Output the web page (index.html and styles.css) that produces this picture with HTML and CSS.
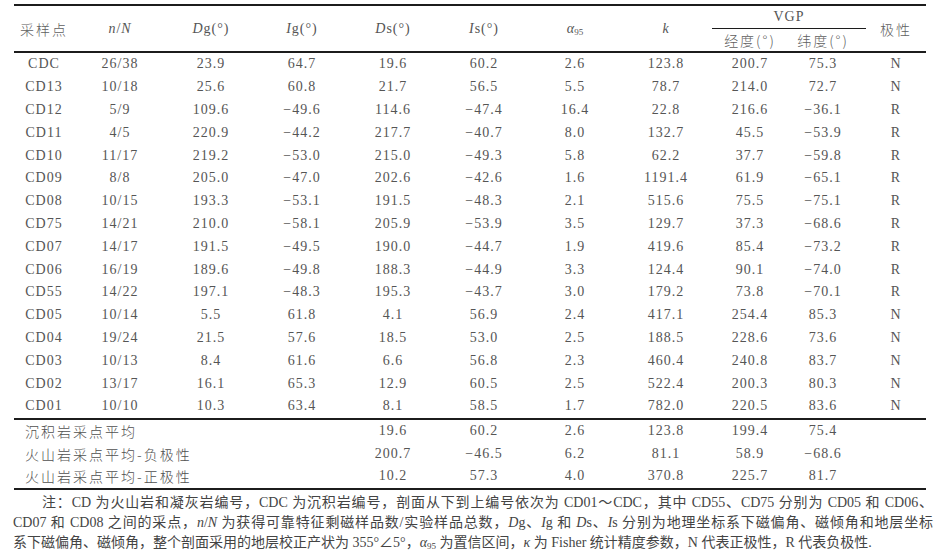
FILE: index.html
```html
<!DOCTYPE html>
<html lang="zh-CN">
<head>
<meta charset="utf-8">
<title>古地磁数据表</title>
<link rel="stylesheet" href="styles.css">
</head>
<body>
<table class="data">
  <colgroup>
    <col class="c-site"><col class="c-n"><col class="c-dg"><col class="c-ig"><col class="c-ds"><col class="c-is"><col class="c-a95"><col class="c-k"><col class="c-lon"><col class="c-lat"><col class="c-pol">
  </colgroup>
  <thead>
    <tr class="h1">
      <th rowspan="2" class="cjk">采样点</th>
      <th rowspan="2"><i>n</i>/<i>N</i></th>
      <th rowspan="2"><i>D</i>g(°)</th>
      <th rowspan="2"><i>I</i>g(°)</th>
      <th rowspan="2"><i>D</i>s(°)</th>
      <th rowspan="2"><i>I</i>s(°)</th>
      <th rowspan="2"><i class="alpha">α</i><sub>95</sub></th>
      <th rowspan="2"><i>k</i></th>
      <th colspan="2" class="vgp">VGP</th>
      <th rowspan="2" class="cjk">极性</th>
    </tr>
    <tr class="h2">
      <th class="cjk">经度(°)</th>
      <th class="cjk lat">纬度(°)</th>
    </tr>
  </thead>
  <tbody class="sites">
    <tr><td>CDC</td><td>26/38</td><td>23.9</td><td>64.7</td><td>19.6</td><td>60.2</td><td>2.6</td><td>123.8</td><td>200.7</td><td class="lat">75.3</td><td>N</td></tr>
    <tr><td>CD13</td><td>10/18</td><td>25.6</td><td>60.8</td><td>21.7</td><td>56.5</td><td>5.5</td><td>78.7</td><td>214.0</td><td class="lat">72.7</td><td>N</td></tr>
    <tr><td>CD12</td><td>5/9</td><td>109.6</td><td>−49.6</td><td>114.6</td><td>−47.4</td><td>16.4</td><td>22.8</td><td>216.6</td><td class="lat">−36.1</td><td>R</td></tr>
    <tr><td>CD11</td><td>4/5</td><td>220.9</td><td>−44.2</td><td>217.7</td><td>−40.7</td><td>8.0</td><td>132.7</td><td>45.5</td><td class="lat">−53.9</td><td>R</td></tr>
    <tr><td>CD10</td><td>11/17</td><td>219.2</td><td>−53.0</td><td>215.0</td><td>−49.3</td><td>5.8</td><td>62.2</td><td>37.7</td><td class="lat">−59.8</td><td>R</td></tr>
    <tr><td>CD09</td><td>8/8</td><td>205.0</td><td>−47.0</td><td>202.6</td><td>−42.6</td><td>1.6</td><td>1191.4</td><td>61.9</td><td class="lat">−65.1</td><td>R</td></tr>
    <tr><td>CD08</td><td>10/15</td><td>193.3</td><td>−53.1</td><td>191.5</td><td>−48.3</td><td>2.1</td><td>515.6</td><td>75.5</td><td class="lat">−75.1</td><td>R</td></tr>
    <tr><td>CD75</td><td>14/21</td><td>210.0</td><td>−58.1</td><td>205.9</td><td>−53.9</td><td>3.5</td><td>129.7</td><td>37.3</td><td class="lat">−68.6</td><td>R</td></tr>
    <tr><td>CD07</td><td>14/17</td><td>191.5</td><td>−49.5</td><td>190.0</td><td>−44.7</td><td>1.9</td><td>419.6</td><td>85.4</td><td class="lat">−73.2</td><td>R</td></tr>
    <tr><td>CD06</td><td>16/19</td><td>189.6</td><td>−49.8</td><td>188.3</td><td>−44.9</td><td>3.3</td><td>124.4</td><td>90.1</td><td class="lat">−74.0</td><td>R</td></tr>
    <tr><td>CD55</td><td>14/22</td><td>197.1</td><td>−48.3</td><td>195.3</td><td>−43.7</td><td>3.0</td><td>179.2</td><td>73.8</td><td class="lat">−70.1</td><td>R</td></tr>
    <tr><td>CD05</td><td>10/14</td><td>5.5</td><td>61.8</td><td>4.1</td><td>56.9</td><td>2.4</td><td>417.1</td><td>254.4</td><td class="lat">85.3</td><td>N</td></tr>
    <tr><td>CD04</td><td>19/24</td><td>21.5</td><td>57.6</td><td>18.5</td><td>53.0</td><td>2.5</td><td>188.5</td><td>228.6</td><td class="lat">73.6</td><td>N</td></tr>
    <tr><td>CD03</td><td>10/13</td><td>8.4</td><td>61.6</td><td>6.6</td><td>56.8</td><td>2.3</td><td>460.4</td><td>240.8</td><td class="lat">83.7</td><td>N</td></tr>
    <tr><td>CD02</td><td>13/17</td><td>16.1</td><td>65.3</td><td>12.9</td><td>60.5</td><td>2.5</td><td>522.4</td><td>200.3</td><td class="lat">80.3</td><td>N</td></tr>
    <tr><td>CD01</td><td>10/10</td><td>10.3</td><td>63.4</td><td>8.1</td><td>58.5</td><td>1.7</td><td>782.0</td><td>220.5</td><td class="lat">83.6</td><td>N</td></tr>
  </tbody>
  <tbody class="means">
    <tr><td colspan="4" class="label">沉积岩采点平均</td><td>19.6</td><td>60.2</td><td>2.6</td><td>123.8</td><td>199.4</td><td class="lat">75.4</td><td></td></tr>
    <tr><td colspan="4" class="label">火山岩采点平均-负极性</td><td>200.7</td><td>−46.5</td><td>6.2</td><td>81.1</td><td>58.9</td><td class="lat">−68.6</td><td></td></tr>
    <tr><td colspan="4" class="label">火山岩采点平均-正极性</td><td>10.2</td><td>57.3</td><td>4.0</td><td>370.8</td><td>225.7</td><td class="lat">81.7</td><td></td></tr>
  </tbody>
</table>
<div class="notes">
  <p class="line first">注：CD 为火山岩和凝灰岩编号，CDC 为沉积岩编号，剖面从下到上编号依次为 CD01～CDC，其中 CD55、CD75 分别为 CD05 和 CD06、</p>
  <p class="line">CD07 和 CD08 之间的采点，<i>n</i>/<i>N</i> 为获得可靠特征剩磁样品数/实验样品总数，<i>D</i>g、<i>I</i>g 和 <i>D</i>s、<i>I</i>s 分别为地理坐标系下磁偏角、磁倾角和地层坐标</p>
  <p class="line last">系下磁偏角、磁倾角，整个剖面采用的地层校正产状为 355°∠5°，<i class="alpha">α</i><sub>95</sub> 为置信区间，<i>κ</i> 为 Fisher 统计精度参数，N 代表正极性，R 代表负极性.</p>
</div>
</body>
</html>
```
FILE: styles.css
```css
html, body {
  margin: 0;
  padding: 0;
  background: #ffffff;
}

body {
  font-family: "Liberation Serif", "Noto Sans CJK SC", serif;
  color: #555555;
  font-size: 14px;
}

.data {
  margin: 4px 0 0 14px;
  width: 912px;
  table-layout: fixed;
  border-collapse: collapse;
  border-top: 2px solid #1c1c1c;
  letter-spacing: 1px;
}

.c-site { width: 60px; }
.c-n { width: 92px; }
.c-dg { width: 90px; }
.c-ig { width: 92px; }
.c-ds { width: 90px; }
.c-is { width: 92px; }
.c-a95 { width: 90px; }
.c-k { width: 92px; }
.c-lon { width: 76px; }
.c-lat { width: 78px; }
.c-pol { width: 60px; }

th, td {
  padding: 0;
  text-align: center;
  font-weight: normal;
  white-space: nowrap;
}

thead {
  border-bottom: 2px solid #1c1c1c;
}

th {
  font-size: 14px;
}

.h1 th {
  height: 22px;
}

.h2 th {
  height: 22px;
}

.cjk {
  font-family: "Noto Sans CJK SC", sans-serif;
  font-size: 14px;
  letter-spacing: 2px;
  color: #606060;
  font-weight: 300;
}

.vgp {
  border-bottom: 1px solid #1c1c1c;
  letter-spacing: 1px;
}

.lat {
  padding-right: 8px;
}

sub {
  font-size: 9px;
  vertical-align: -2px;
  line-height: 0;
  letter-spacing: 0;
}

.alpha {
  letter-spacing: 0;
}

.sites {
  border-bottom: 2px solid #1c1c1c;
}

.sites td {
  height: 22.8px;
  line-height: 16px;
}

.means {
  border-bottom: 2px solid #1c1c1c;
}

.means td {
  height: 22.6px;
  line-height: 16px;
}

.means .label {
  text-align: left;
  padding-left: 11px;
  font-family: "Noto Sans CJK SC", sans-serif;
  font-weight: 300;
  color: #505050;
  letter-spacing: 2px;
}

.notes {
  margin: 3px 0 0 13px;
  width: 920px;
  font-family: "Liberation Serif", "Noto Sans CJK SC", serif;
  font-size: 14px;
  color: #444444;
}

.line {
  margin: 0;
  line-height: 20px;
  white-space: nowrap;
  text-align: justify;
  text-align-last: justify;
}

.line.first {
  padding-left: 29px;
}

.line.last {
  text-align-last: left;
  letter-spacing: 0;
}

.notes sub {
  font-size: 9px;
}
```
